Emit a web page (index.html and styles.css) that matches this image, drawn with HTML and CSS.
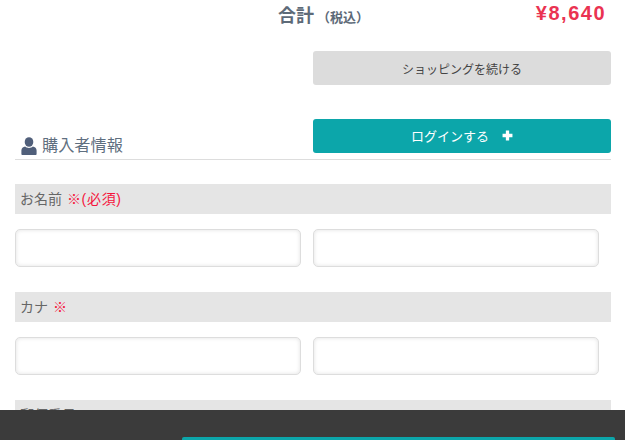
FILE: index.html
```html
<!DOCTYPE html>
<html lang="ja">
<head>
<meta charset="utf-8">
<title>購入者情報</title>
<link rel="stylesheet" href="styles.css">
</head>
<body>
<main class="page">
  <div class="total-row">
    <div class="total-label">合計<small class="tax">（税込）</small></div>
    <div class="total-price">¥8,640</div>
  </div>
  <div class="actions">
    <a class="btn btn-gray">ショッピングを続ける</a>
  </div>
  <div class="heading-row">
    <h2 class="heading">
      <svg class="user-icon" viewBox="0 0 16 18" width="16" height="18" aria-hidden="true"><ellipse cx="8" cy="5" rx="4.3" ry="4.8"/><path d="M0.4 17v-3.6C0.4 11.4 2 10 4.2 9.6 5.2 10.6 6.5 11 8 11s2.800-.4 3.800-1.400c2.200.4 3.800 1.800 3.800 3.800V17c0 .6-.5 1-1 1H1.400c-.5 0-1-.4-1-1z"/></svg>
      購入者情報
    </h2>
    <a class="btn btn-teal">ログインする<svg class="plus" viewBox="0 0 10 10" width="11" height="11" aria-hidden="true"><path d="M3.500 0.500h3v3h3v3h-3v3h-3v-3h-3v-3h3z"/></svg></a>
  </div>
  <section class="field">
    <div class="field-label">お名前 <span class="req">※(必須)</span></div>
    <div class="inputs"><input class="input" type="text"><input class="input" type="text"></div>
  </section>
  <section class="field">
    <div class="field-label">カナ <span class="req">※</span></div>
    <div class="inputs"><input class="input" type="text"><input class="input" type="text"></div>
  </section>
  <section class="field">
    <div class="field-label">郵便番号</div>
  </section>
</main>
<footer class="footer"><a class="footer-btn"></a></footer>
</body>
</html>
```
FILE: styles.css
```css
* { box-sizing: border-box; }
html, body { height: 100%; overflow: hidden; }
body {
  margin: 0;
  background: #fff;
  color: #666;
  font-family: "Liberation Sans", "Noto Sans CJK JP", sans-serif;
}
.page { padding: 0 14px 0 15px; }
.total-row { display: flex; height: 51px; padding-right: 5px; }
.total-label {
  margin-left: 263px;
  padding-top: 5px;
  font-size: 18px;
  line-height: 23px;
  font-weight: 700;
  color: #5d6a78;
}
.tax { font-size: 13px; color: #5d6a78; margin-left: 3px; }
.total-price {
  margin-left: auto;
  padding-top: 2px;
  font-size: 20px;
  line-height: 23px;
  font-weight: 700;
  letter-spacing: 1.5px;
  color: #ea3352;
}
.actions { display: flex; justify-content: flex-end; }
.btn {
  display: flex;
  align-items: center;
  justify-content: center;
  width: 298px;
  height: 34px;
  border-radius: 3px;
  font-size: 12px;
}
.btn-gray { background: #dcdcdc; color: #444; }
.btn-teal { background: #0ca6aa; color: #fff; font-size: 13px; padding-bottom: 2px; }
.plus { fill: #fff; margin-left: 13px; }
.heading-row {
  display: flex;
  justify-content: space-between;
  align-items: flex-start;
  margin-top: 34px;
  height: 41px;
  border-bottom: 1px solid #ddd;
}
.heading {
  display: flex;
  align-items: center;
  gap: 5px;
  margin: 14px 0 0 6px;
  font-size: 16.2px;
  line-height: 24px;
  font-weight: 400;
  color: #5f6f80;
}
.user-icon { fill: #505f7a; flex: none; margin-top: 2px; }
.field { margin-bottom: 25px; }
.heading-row + .field { margin-top: 24px; }
.field-label {
  height: 30px;
  padding-left: 5px;
  background: #e5e5e5;
  font-size: 14px;
  line-height: 30px;
  word-spacing: 1px;
  color: #666;
}
.req { color: #f5143c; letter-spacing: 0.7px; }
.inputs { display: flex; gap: 12px; margin-top: 15px; }
.input {
  width: 286px;
  height: 38px;
  padding: 0;
  border: 1px solid #ddd;
  border-radius: 5px;
  background: #fff;
  box-shadow: inset 0 0 4px rgba(0, 0, 0, 0.12);
}
.footer {
  position: fixed;
  left: 0;
  right: 0;
  bottom: 0;
  height: 30px;
  background: #3b3b3b;
}
.footer-btn {
  position: absolute;
  left: 182px;
  top: 27px;
  width: 433px;
  height: 10px;
  background: #0ca6aa;
  border-radius: 2px 2px 0 0;
}
```
